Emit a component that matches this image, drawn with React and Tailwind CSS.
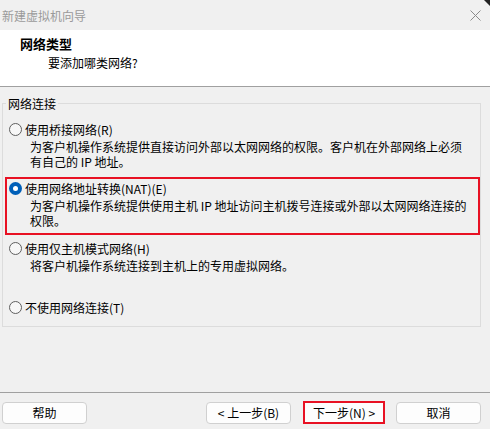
import React from 'react';

const font = { fontFamily: '"Noto Sans CJK SC", "Microsoft YaHei", sans-serif' };

function Radio({ checked }) {
    if (checked) {
        return (
            <span className="w-[13px] h-[13px] rounded-full bg-[#005fb8] flex items-center justify-center shrink-0">
                <span className="w-[5px] h-[5px] rounded-full bg-white"></span>
            </span>
        );
    }
    return <span className="w-[13px] h-[13px] rounded-full border border-[#5f5f5f] bg-[#f7f7f7] shrink-0"></span>;
}

function Option({ checked, label, lines }) {
    return (
        <div>
            <div className="flex items-center h-[15px]">
                <Radio checked={checked} />
                <span className="ml-[3px] leading-[15px]">{label}</span>
            </div>
            {lines && (
                <div className="pl-[21px] mt-[2px]">
                    {lines.map((l, i) => (
                        <div key={i} className="leading-[15px]">{l}</div>
                    ))}
                </div>
            )}
        </div>
    );
}

function Button({ children, highlight }) {
    if (highlight) {
        return (
            <div className="border-2 border-[#e81123] w-[82px] h-[23px] flex">
                <div className="flex-1 bg-[#fdfdfd] flex items-center justify-center">{children}</div>
            </div>
        );
    }
    return (
        <div className="w-[85px] h-[22px] bg-[#fdfdfd] border border-[#d0d0d0] rounded-[4px] flex items-center justify-center">
            {children}
        </div>
    );
}

export default function App() {
    return (
        <div className="w-[490px] h-[429px] bg-[#f0f0f0] text-[12px] text-black overflow-hidden relative" style={font}>
            {/* title bar */}
            <div className="h-[30px] flex items-center justify-between pl-[2px] pr-[9px]">
                <span className="text-[#9a9a9a] leading-[15px]">新建虚拟机向导</span>
                <svg width="11" height="11" viewBox="0 0 11 11">
                    <path d="M0.5 0.5 L10.5 10.5 M10.5 0.5 L0.5 10.5" stroke="#8a8a8a" strokeWidth="1" />
                </svg>
            </div>
            <div className="absolute top-0 right-0 w-0 h-0 border-t-[6px] border-l-[6px] border-t-[#222] border-l-transparent"></div>

            {/* header */}
            <div className="h-[57px] bg-white border-b border-[#a0a0a0]">
                <div className="pt-[6px] pl-[20px] font-bold text-[13px] leading-[16px]">网络类型</div>
                <div className="pl-[48px] pt-[3px] leading-[15px]">要添加哪类网络?</div>
            </div>

            {/* group box */}
            <fieldset className="ml-[2px] mt-[9px] w-[479px] h-[231px] border border-[#dcdcdc] p-0 m-0">
                <legend className="ml-[3px] px-[2px] leading-[15px]">网络连接</legend>
                <div className="pl-[6px] mt-[11px]">
                    <Option
                        label="使用桥接网络(R)"
                        lines={['为客户机操作系统提供直接访问外部以太网网络的权限。客户机在外部网络上必须', '有自己的 IP 地址。']}
                    />
                </div>
                <div className="ml-[2px] mt-[8px] border-2 border-[#e81123] h-[58px] pl-[2px] pt-[2px]">
                    <Option
                        checked
                        label="使用网络地址转换(NAT)(E)"
                        lines={['为客户机操作系统提供使用主机 IP 地址访问主机拨号连接或外部以太网网络连接的', '权限。']}
                    />
                </div>
                <div className="pl-[6px] mt-[6px]">
                    <Option label="使用仅主机模式网络(H)" lines={['将客户机操作系统连接到主机上的专用虚拟网络。']} />
                </div>
                <div className="pl-[6px] mt-[27px]">
                    <Option label="不使用网络连接(T)" />
                </div>
            </fieldset>

            {/* footer */}
            <div className="mt-[65px] border-t border-[#a0a0a0]"></div>
            <div className="flex items-center mt-[8px] px-[2px]">
                <Button>帮助</Button>
                <div className="ml-auto flex items-center">
                    <Button>&lt; 上一步(B)</Button>
                    <div className="ml-[12px]">
                        <Button highlight>下一步(N) &gt;</Button>
                    </div>
                    <div className="ml-[11px] mr-[7px]">
                        <Button>取消</Button>
                    </div>
                </div>
            </div>
        </div>
    );
}
